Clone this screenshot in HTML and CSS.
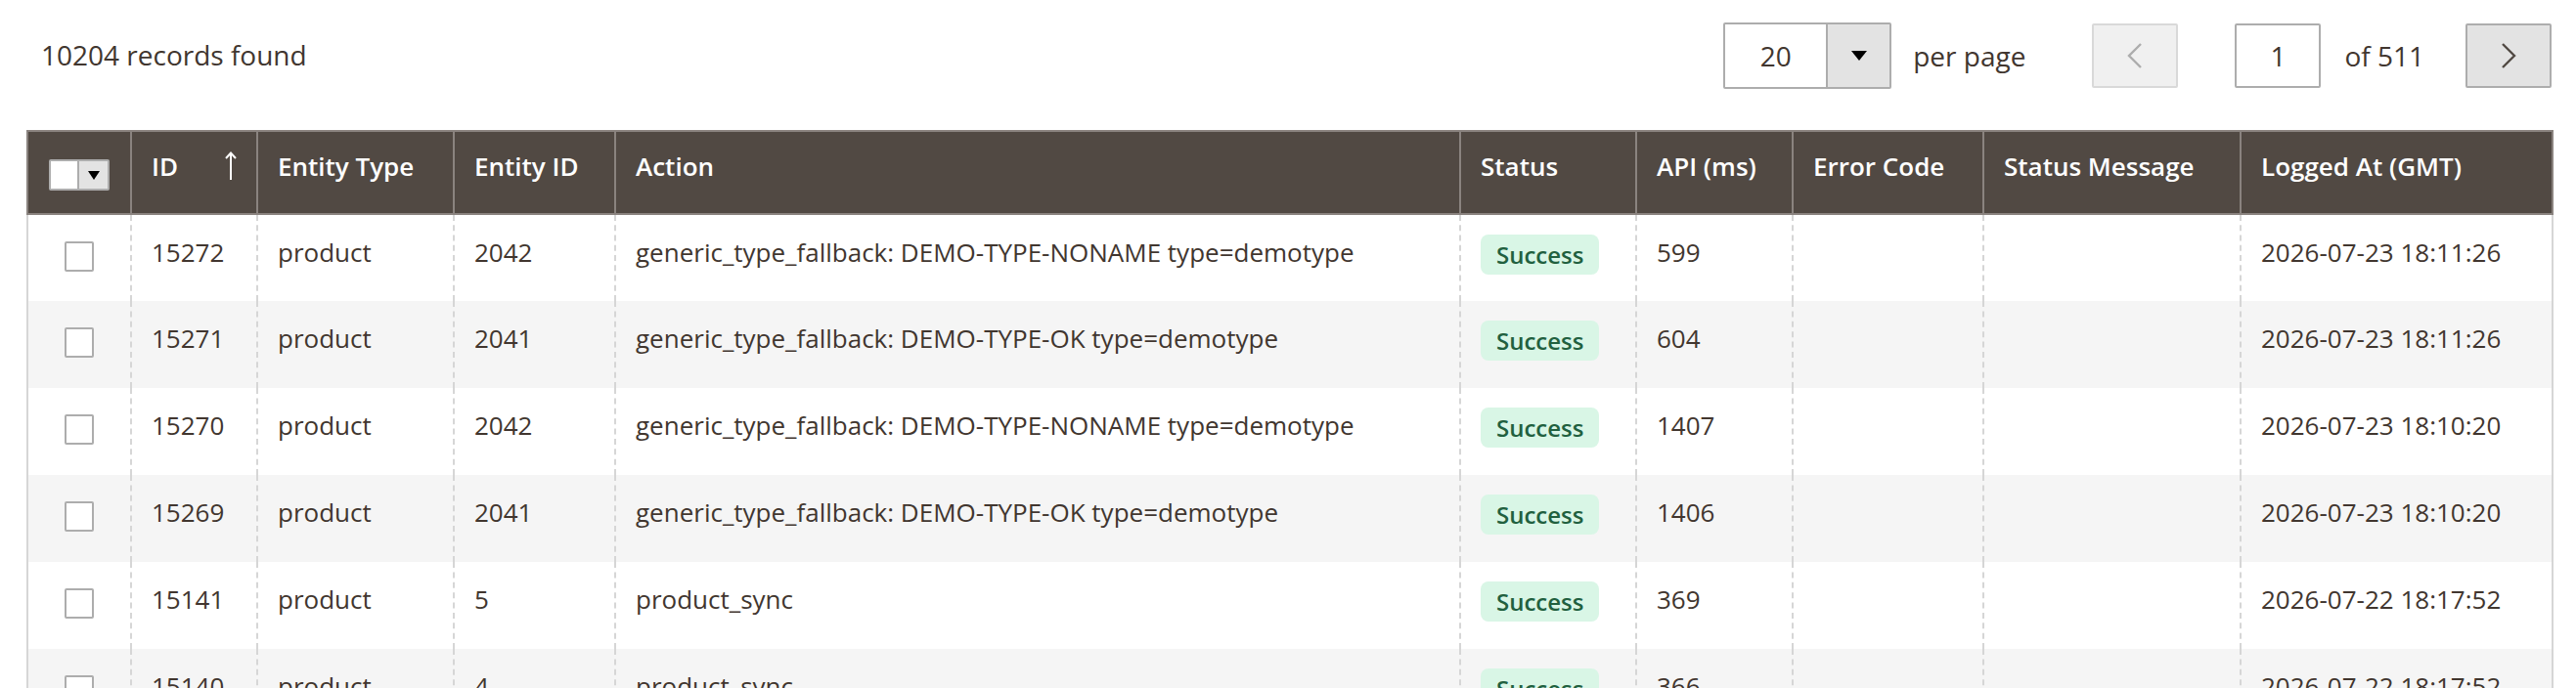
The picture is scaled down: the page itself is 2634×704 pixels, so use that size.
FILE: index.html
```html
<!DOCTYPE html>
<html lang="en">
<head>
    <meta charset="UTF-8">
    <title>Sync Log</title>
    <link rel="stylesheet" href="styles.css">
</head>
<body>
    <div class="grid-wrap">
        <div class="toolbar">
            <div class="records">10204 records found</div>
            <div class="pager">
                <div class="per-page">
                    <span class="per-page-value">20</span>
                    <span class="per-page-toggle"><span class="caret"></span></span>
                </div>
                <span class="pager-label per-page-label">per page</span>
                <button class="pager-btn pager-prev" disabled>
                    <svg width="16" height="26" viewBox="0 0 16 26"><path d="M14 1 L2 13 L14 25" fill="none" stroke="currentColor" stroke-width="2.4"/></svg>
                </button>
                <span class="page-input">1</span>
                <span class="pager-label page-total">of 511</span>
                <button class="pager-btn pager-next">
                    <svg width="16" height="26" viewBox="0 0 16 26"><path d="M2 1 L14 13 L2 25" fill="none" stroke="currentColor" stroke-width="2.4"/></svg>
                </button>
            </div>
        </div>

        <table class="data-grid">
            <colgroup>
                <col style="width:106px">
                <col style="width:129px">
                <col style="width:201px">
                <col style="width:165px">
                <col style="width:864px">
                <col style="width:180px">
                <col style="width:160px">
                <col style="width:195px">
                <col style="width:263px">
                <col style="width:319px">
            </colgroup>
            <thead>
                <tr>
                    <th class="col-select">
                        <span class="mass-select"><span class="mass-box"></span><span class="mass-toggle"><span class="caret small"></span></span></span>
                    </th>
                    <th class="sortable">
                        <span class="th-inner">ID
                            <svg class="sort-arrow" width="12" height="30" viewBox="0 0 12 30"><path d="M6 29 V2 M1 7 L6 1.5 L11 7" fill="none" stroke="#fff" stroke-width="2"/></svg>
                        </span>
                    </th>
                    <th>Entity Type</th>
                    <th>Entity ID</th>
                    <th>Action</th>
                    <th>Status</th>
                    <th>API (ms)</th>
                    <th>Error Code</th>
                    <th>Status Message</th>
                    <th>Logged At (GMT)</th>
                </tr>
            </thead>
            <tbody>
                <tr>
                    <td class="col-select"><span class="checkbox"></span></td>
                    <td>15272</td>
                    <td>product</td>
                    <td>2042</td>
                    <td>generic_type_fallback: DEMO-TYPE-NONAME type=demotype</td>
                    <td><span class="badge">Success</span></td>
                    <td>599</td>
                    <td></td>
                    <td></td>
                    <td>2026-07-23 18:11:26</td>
                </tr>
                <tr>
                    <td class="col-select"><span class="checkbox"></span></td>
                    <td>15271</td>
                    <td>product</td>
                    <td>2041</td>
                    <td>generic_type_fallback: DEMO-TYPE-OK type=demotype</td>
                    <td><span class="badge">Success</span></td>
                    <td>604</td>
                    <td></td>
                    <td></td>
                    <td>2026-07-23 18:11:26</td>
                </tr>
                <tr>
                    <td class="col-select"><span class="checkbox"></span></td>
                    <td>15270</td>
                    <td>product</td>
                    <td>2042</td>
                    <td>generic_type_fallback: DEMO-TYPE-NONAME type=demotype</td>
                    <td><span class="badge">Success</span></td>
                    <td>1407</td>
                    <td></td>
                    <td></td>
                    <td>2026-07-23 18:10:20</td>
                </tr>
                <tr>
                    <td class="col-select"><span class="checkbox"></span></td>
                    <td>15269</td>
                    <td>product</td>
                    <td>2041</td>
                    <td>generic_type_fallback: DEMO-TYPE-OK type=demotype</td>
                    <td><span class="badge">Success</span></td>
                    <td>1406</td>
                    <td></td>
                    <td></td>
                    <td>2026-07-23 18:10:20</td>
                </tr>
                <tr>
                    <td class="col-select"><span class="checkbox"></span></td>
                    <td>15141</td>
                    <td>product</td>
                    <td>5</td>
                    <td>product_sync</td>
                    <td><span class="badge">Success</span></td>
                    <td>369</td>
                    <td></td>
                    <td></td>
                    <td>2026-07-22 18:17:52</td>
                </tr>
                <tr>
                    <td class="col-select"><span class="checkbox"></span></td>
                    <td>15140</td>
                    <td>product</td>
                    <td>4</td>
                    <td>product_sync</td>
                    <td><span class="badge">Success</span></td>
                    <td>366</td>
                    <td></td>
                    <td></td>
                    <td>2026-07-22 18:17:52</td>
                </tr>
            </tbody>
        </table>
    </div>
</body>
</html>
```

FILE: styles.css
```css
* {
    margin: 0;
    padding: 0;
    box-sizing: border-box;
}

body {
    font-family: "Open Sans", "Noto Sans", sans-serif;
    font-size: 28px;
    color: #41362f;
    background: #fff;
    overflow: hidden;
}

.grid-wrap {
    padding: 0 25px 0 27px;
}

/* toolbar above the grid */
.toolbar {
    display: flex;
    justify-content: space-between;
    align-items: center;
    padding-top: 24px;
    height: 90px;
    margin-bottom: 43px;
}

.records {
    padding-left: 15px;
    margin-top: -2px;
}

.pager {
    display: flex;
    align-items: center;
}

.per-page {
    display: flex;
    width: 172px;
    height: 68px;
    border: 2px solid #adadad;
    border-radius: 2px;
}

.per-page-value {
    width: 105px;
    display: flex;
    align-items: center;
    justify-content: center;
    border-right: 2px solid #adadad;
}

.per-page-toggle {
    flex: 1;
    background: #e3e3e3;
    display: flex;
    align-items: center;
    justify-content: center;
}

.caret {
    width: 0;
    height: 0;
    border-left: 8px solid transparent;
    border-right: 8px solid transparent;
    border-top: 10px solid #000;
}

.caret.small {
    border-left-width: 6px;
    border-right-width: 6px;
    border-top-width: 9px;
}

.pager-label {
    white-space: nowrap;
}

.per-page-label {
    margin: 0 68px 0 22px;
}

.pager-btn {
    width: 88px;
    height: 66px;
    border: 2px solid #adadad;
    background: #e3e3e3;
    color: #514943;
    border-radius: 2px;
    display: flex;
    align-items: center;
    justify-content: center;
}

.pager-prev {
    background: #f0f0f0;
    border-color: #d9d9d9;
    color: #adadad;
    margin-right: 58px;
}

.page-input {
    width: 88px;
    height: 66px;
    border: 2px solid #adadad;
    border-radius: 2px;
    display: flex;
    align-items: center;
    justify-content: center;
}

.page-total {
    margin: 0 42px 0 24px;
}

/* the grid */
.data-grid {
    width: 2582px;
    table-layout: fixed;
    border-collapse: collapse;
    font-size: 26px;
}

.data-grid th {
    background: #514943;
    color: #fff;
    font-weight: 600;
    text-align: left;
    height: 85px;
    padding: 17px 20px 0;
    border: 2px solid #8a837f;
    white-space: nowrap;
    vertical-align: top;
}

.th-inner {
    display: flex;
    align-items: center;
    justify-content: space-between;
}

.data-grid td {
    height: 89px;
    padding: 20px 20px 0;
    border-left: 2px dashed #d6d6d6;
    border-right: 2px dashed #d6d6d6;
    white-space: nowrap;
    vertical-align: top;
}

.data-grid td:first-child {
    border-left-style: solid;
}

.data-grid td:last-child {
    border-right-style: solid;
}

.data-grid tbody tr:nth-child(even) {
    background: #f5f5f5;
}

.data-grid .col-select {
    text-align: center;
    padding: 0;
    vertical-align: middle;
}

.data-grid td.col-select {
    vertical-align: top;
    padding-top: 27px;
}

.checkbox {
    display: block;
    margin: 0 auto;
    width: 30px;
    height: 31px;
    border: 2px solid #adadad;
    border-radius: 2px;
    background: #fff;
}

.mass-select {
    display: inline-flex;
    height: 32px;
    width: 62px;
    border: 2px solid #adadad;
    border-radius: 2px;
    vertical-align: middle;
}

.mass-box {
    width: 29px;
    background: #fff;
    border-right: 2px solid #adadad;
}

.mass-toggle {
    flex: 1;
    background: #e3e3e3;
    display: flex;
    align-items: center;
    justify-content: center;
}

.badge {
    display: inline-block;
    vertical-align: top;
    background: #d9f6e6;
    color: #21603f;
    font-size: 24px;
    font-weight: 600;
    line-height: 41px;
    padding: 0 16px;
    border-radius: 8px;
}
```
